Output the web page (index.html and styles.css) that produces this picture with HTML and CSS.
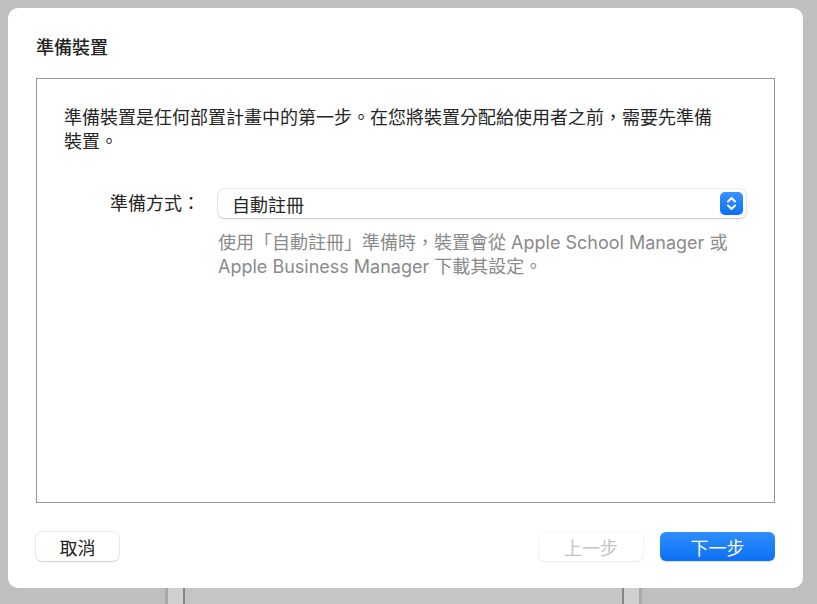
FILE: index.html
```html
<!DOCTYPE html>
<html lang="zh-Hant">
<head>
    <meta charset="UTF-8">
    <meta name="viewport" content="width=device-width, initial-scale=1.0">
    <title>準備裝置</title>
    <link rel="stylesheet" href="styles.css">
</head>
<body>
    <div class="dialog">
        <h1 class="title">準備裝置</h1>
        <div class="panel">
            <p class="intro">準備裝置是任何部置計畫中的第一步。在您將裝置分配給使用者之前，需要先準備裝置。</p>
            <div class="field">
                <label for="method">準備方式：</label>
                <div class="select" id="method">
                    <span>自動註冊</span>
                    <svg class="stepper" width="23" height="23" viewBox="0 0 23 23">
                        <defs>
                            <linearGradient id="stepBlue" x1="0" y1="0" x2="0" y2="1">
                                <stop offset="0" stop-color="#3a93ff"/>
                                <stop offset="1" stop-color="#0b6ff2"/>
                            </linearGradient>
                        </defs>
                        <rect x="0" y="0" width="23" height="23" rx="5" fill="url(#stepBlue)"/>
                        <path d="M8 9.5 L11.5 6 L15 9.5 M8 13.5 L11.5 17 L15 13.5" fill="none" stroke="#fff" stroke-width="2" stroke-linecap="round" stroke-linejoin="round"/>
                    </svg>
                </div>
                <p class="hint">使用「自動註冊」準備時，裝置會從 Apple School Manager 或 Apple Business Manager 下載其設定。</p>
            </div>
        </div>
        <footer class="actions">
            <button class="btn cancel">取消</button>
            <span class="spacer"></span>
            <button class="btn back" disabled>上一步</button>
            <button class="btn next">下一步</button>
        </footer>
    </div>
    <div class="behind">
        <div class="pane"><div class="pane-inner"></div></div>
    </div>
</body>
</html>
```

FILE: styles.css
```css
body {
    margin: 0;
    height: 604px;
    overflow: hidden;
    background: #bfbfbf;
    font-family: Inter, "Noto Sans CJK TC", sans-serif;
    color: #262626;
    text-spacing-trim: space-all;
}
.dialog {
    box-sizing: border-box;
    margin: 8px 0 0 8px;
    width: 795px;
    height: 580px;
    padding: 28px 28px 27px 28px;
    background: #fff;
    border-radius: 10px;
    display: flex;
    flex-direction: column;
}
.title {
    margin: 0;
    font-size: 18px;
    line-height: 24px;
    font-weight: 500;
    color: #222;
}
.panel {
    box-sizing: border-box;
    margin-top: 18px;
    height: 425px;
    border: 1px solid #979797;
    padding: 27px 27px;
}
.intro {
    margin: 0;
    max-width: 660px;
    font-size: 18px;
    line-height: 24px;
}
.field {
    margin-top: 35px;
    display: grid;
    grid-template-columns: 136px 528px;
    column-gap: 18px;
    align-items: center;
}
.field label {
    text-align: right;
    font-size: 18px;
    line-height: 24px;
}
.select {
    box-sizing: border-box;
    height: 29px;
    display: flex;
    align-items: center;
    justify-content: space-between;
    padding: 0 3px 0 14px;
    background: #fff;
    border-radius: 6px;
    box-shadow: 0 0 0 0.5px rgba(0, 0, 0, 0.16), 0 1px 1.5px rgba(0, 0, 0, 0.16);
    font-size: 18px;
}
.hint {
    grid-column: 2;
    margin: 13px 0 0 0;
    font-size: 18px;
    line-height: 24px;
    color: #8a8a8a;
}
.actions {
    margin-top: 29px;
    display: flex;
    align-items: center;
}
.spacer {
    flex: 1;
}
.btn {
    box-sizing: border-box;
    height: 29px;
    padding: 0;
    border: none;
    border-radius: 6px;
    font-family: inherit;
    font-size: 18px;
    background: #fff;
    color: #222;
    box-shadow: 0 0 0 0.5px rgba(0, 0, 0, 0.14), 0 1px 1.5px rgba(0, 0, 0, 0.12);
}
.cancel {
    width: 83px;
}
.back {
    width: 104px;
    color: #c4c4c4;
    box-shadow: 0 0 0 0.5px rgba(0, 0, 0, 0.07), 0 1px 1.5px rgba(0, 0, 0, 0.05);
}
.next {
    width: 115px;
    margin-left: 17px;
    color: #fff;
    background: linear-gradient(#2f8dff, #0a70f6);
    box-shadow: 0 0.5px 1px rgba(0, 0, 0, 0.15);
}
.behind {
    height: 16px;
    display: flex;
}
.pane {
    box-sizing: border-box;
    margin-left: 165px;
    width: 477px;
    height: 100%;
    padding: 0 15px;
    background: #cfcfcf;
    border-left: 3px solid #a9a9a9;
    border-right: 3px solid #a9a9a9;
}
.pane-inner {
    height: 100%;
    background: #c5c5c5;
    border-left: 2px solid #858585;
    border-right: 2px solid #858585;
}
```
